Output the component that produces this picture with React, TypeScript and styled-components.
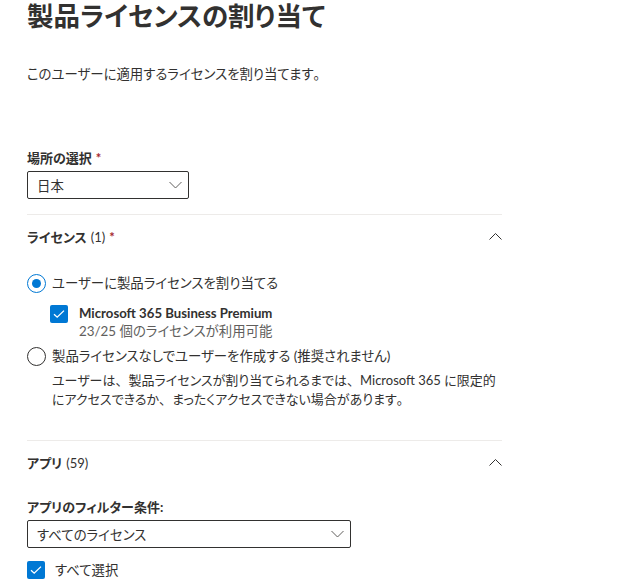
import React from "react";
import styled, { createGlobalStyle } from "styled-components";

const Global = createGlobalStyle`
  html, body { margin: 0; padding: 0; background: #ffffff; }
  body {
    font-family: "Lato", "Noto Sans CJK JP", sans-serif;
    color: #323130;
    font-feature-settings: "palt";
  }
  * { box-sizing: border-box; }
`;

const Page = styled.div`
  width: 618px;
  height: 582px;
  overflow: hidden;
  padding-left: 27px;
`;

const Column = styled.div`
  width: 475px;
  display: flex;
  flex-direction: column;
`;

const Title = styled.h1`
  margin: -3px 0 0 0;
  font-family: "Noto Sans CJK JP", sans-serif;
  font-size: 26.5px;
  line-height: 36px;
  font-weight: 700;
  color: #323130;
  white-space: nowrap;
`;

const Description = styled.p`
  margin: 31px 0 0 0;
  font-size: 13.4px;
  line-height: 20px;
  white-space: nowrap;
`;

const Punct = styled.span`
  font-feature-settings: normal;
`;

const FieldLabel = styled.div<{ $top: number }>`
  margin-top: ${(p) => p.$top}px;
  font-size: 13px;
  line-height: 20px;
  font-weight: 700;
  display: flex;
  align-items: baseline;
  gap: 4px;
  white-space: nowrap;
`;

const Required = styled.span`
  color: #a4262c;
  font-weight: 700;
`;

const Count = styled.span`
  font-size: 13px;
  font-weight: 400;
`;

const Dropdown = styled.div<{ $width: number }>`
  margin-top: 3px;
  width: ${(p) => p.$width}px;
  height: 28px;
  border: 1px solid #323130;
  border-radius: 2px;
  display: flex;
  align-items: center;
  justify-content: space-between;
  padding: 0 6px 0 9px;
  font-size: 13.4px;
`;

const Divider = styled.hr<{ $top: number }>`
  margin: ${(p) => p.$top}px 0 0 0;
  border: 0;
  border-top: 1px solid #edebe9;
  width: 475px;
`;

const SectionHeader = styled.div`
  margin-top: 11px;
  display: flex;
  justify-content: space-between;
  align-items: center;
  height: 20px;
  font-size: 13px;
  font-weight: 700;
`;

const HeaderTitle = styled.div`
  display: flex;
  align-items: baseline;
  gap: 4px;
`;

const RadioRow = styled.div<{ $top: number }>`
  margin-top: ${(p) => p.$top}px;
  display: flex;
  align-items: center;
  gap: 6px;
  font-size: 13.4px;
  line-height: 20px;
  white-space: nowrap;
`;

const RadioCircle = styled.span<{ $checked?: boolean }>`
  width: 19px;
  height: 19px;
  border-radius: 50%;
  border: 1px solid ${(p) => (p.$checked ? "#0078d4" : "#323130")};
  display: flex;
  align-items: center;
  justify-content: center;
  flex-shrink: 0;
  &::after {
    content: "";
    display: ${(p) => (p.$checked ? "block" : "none")};
    width: 9px;
    height: 9px;
    border-radius: 50%;
    background: #0078d4;
  }
`;

const Indented = styled.div<{ $left: number; $top: number }>`
  margin-left: ${(p) => p.$left}px;
  margin-top: ${(p) => p.$top}px;
`;

const CheckRow = styled.div<{ $top: number; $gap: number }>`
  margin-top: ${(p) => p.$top}px;
  display: flex;
  align-items: flex-start;
  gap: ${(p) => p.$gap}px;
  font-size: 13.4px;
  line-height: 20px;
  white-space: nowrap;
`;

const CheckBox = styled.span`
  width: 18px;
  height: 18px;
  border-radius: 2px;
  background: #0078d4;
  display: flex;
  align-items: center;
  justify-content: center;
  flex-shrink: 0;
  margin-top: 1px;
`;

const LicenseName = styled.div`
  font-size: 13.2px;
  font-weight: 700;
  line-height: 18px;
`;

const SubText = styled.div`
  font-size: 13.4px;
  line-height: 18px;
  color: #605e5c;
`;

const HelpText = styled.div`
  font-size: 13px;
  line-height: 19px;
  color: #323130;
  white-space: nowrap;
`;

const Chevron = ({ up }: { up?: boolean }) => (
  <svg width="13" height="8" viewBox="0 0 13 8">
    <path
      d={up ? "M0.5 7.5 L6.5 1.5 L12.5 7.5" : "M0.5 1 L6.5 7 L12.5 1"}
      fill="none"
      stroke={up ? "#323130" : "#605e5c"}
      strokeWidth="1"
    />
  </svg>
);

const Check = () => (
  <svg width="12" height="10" viewBox="0 0 12 10">
    <path d="M1 5.2 L4.2 8.2 L11 1.6" fill="none" stroke="#fff" strokeWidth="1.3" />
  </svg>
);

export default function App() {
  return (
    <>
      <Global />
      <Page>
        <Column>
          <Title>製品ライセンスの割り当て</Title>
          <Description>
            このユーザーに適用するライセンスを割り当てます<Punct>。</Punct>
          </Description>

          <FieldLabel $top={64}>
            場所の選択 <Required>*</Required>
          </FieldLabel>
          <Dropdown $width={162}>
            <span>日本</span>
            <Chevron />
          </Dropdown>

          <Divider $top={15} />
          <SectionHeader>
            <HeaderTitle>
              ライセンス <Count>(1)</Count> <Required>*</Required>
            </HeaderTitle>
            <Chevron up />
          </SectionHeader>

          <RadioRow $top={27}>
            <RadioCircle $checked />
            ユーザーに製品ライセンスを割り当てる
          </RadioRow>
          <Indented $left={23} $top={11}>
            <CheckRow $top={0} $gap={11}>
              <CheckBox>
                <Check />
              </CheckBox>
              <div>
                <LicenseName>Microsoft 365 Business Premium</LicenseName>
                <SubText>23/25 個のライセンスが利用可能</SubText>
              </div>
            </CheckRow>
          </Indented>
          <RadioRow $top={6}>
            <RadioCircle />
            製品ライセンスなしでユーザーを作成する (推奨されません)
          </RadioRow>
          <Indented $left={25} $top={5}>
            <HelpText>
              ユーザーは<Punct>、</Punct>製品ライセンスが割り当てられるまでは<Punct>、</Punct>Microsoft 365 に限定的
              <br />
              にアクセスできるか<Punct>、</Punct>まったくアクセスできない場合があります<Punct>。</Punct>
            </HelpText>
          </Indented>

          <Divider $top={31} />
          <SectionHeader>
            <HeaderTitle>
              アプリ <Count>(59)</Count>
            </HeaderTitle>
            <Chevron up />
          </SectionHeader>

          <FieldLabel $top={25}>アプリのフィルター条件:</FieldLabel>
          <Dropdown $width={324}>
            <span>すべてのライセンス</span>
            <Chevron />
          </Dropdown>

          <CheckRow $top={12} $gap={10}>
            <CheckBox>
              <Check />
            </CheckBox>
            すべて選択
          </CheckRow>
        </Column>
      </Page>
    </>
  );
}
